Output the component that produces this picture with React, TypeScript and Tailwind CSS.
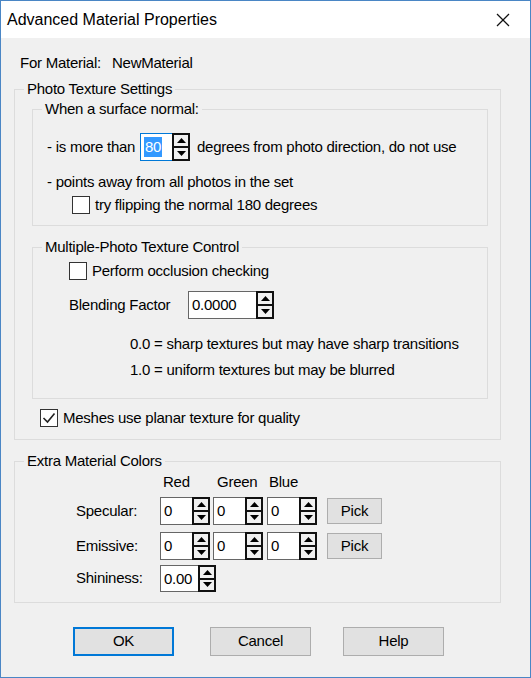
import React from 'react';

const font = { fontFamily: '"Liberation Sans", Arial, sans-serif' };

function Arrow({ up }: { up: boolean }) {
  return (
    <svg width="9" height="5" viewBox="0 0 9 5" className="block">
      {up ? <polygon points="0,5 9,5 4.5,0" fill="#000" /> : <polygon points="0,0 9,0 4.5,5" fill="#000" />}
    </svg>
  );
}

function Spin({ value, width, height = 28, focused = false }: { value: string; width: string; height?: number; focused?: boolean }) {
  return (
    <div
      className={`flex bg-white ${width} ${focused ? 'border border-[#0078d7]' : 'border border-[#666]'}`}
      style={{ height }}
    >
      <div className="flex-1 flex items-center pl-[3px] overflow-hidden">
        {focused ? (
          <span className="bg-[#3399ff] text-white leading-[20px] px-[1px]">{value}</span>
        ) : (
          <span className="leading-[20px]">{value}</span>
        )}
      </div>
      {/* spin buttons sit over the edit frame */}
      <div className="w-[18px] -my-[1px] -mr-[1px] flex flex-col border-2 border-[#111] bg-[#f0f0f0]">
        <div className="flex-1 flex items-center justify-center border-b-2 border-[#111]">
          <Arrow up />
        </div>
        <div className="flex-1 flex items-center justify-center">
          <Arrow up={false} />
        </div>
      </div>
    </div>
  );
}

function Check({ checked = false }: { checked?: boolean }) {
  return (
    <div className="w-[18px] h-[18px] border border-[#333] bg-white flex items-center justify-center shrink-0">
      {checked && (
        <svg width="14" height="12" viewBox="0 0 14 12">
          <polyline points="1.5,6 5.5,10 12.5,1.5" fill="none" stroke="#222" strokeWidth="1.6" />
        </svg>
      )}
    </div>
  );
}

function Btn({ label, primary = false, className = '' }: { label: string; primary?: boolean; className?: string }) {
  return (
    <div
      className={`flex items-center justify-center bg-[#e1e1e1] ${
        primary ? 'border-2 border-[#0078d7]' : 'border border-[#adadad]'
      } ${className}`}
    >
      {label}
    </div>
  );
}

export default function App() {
  return (
    <div
      className="w-[531px] h-[678px] flex flex-col border border-[#4a86c5] bg-[#f0f0f0] text-black text-[15px] tracking-[-0.25px] overflow-hidden"
      style={font}
    >
      {/* title bar */}
      <div className="h-[37px] bg-white flex items-center justify-between pl-[6px] pr-[20px] shrink-0">
        <span className="text-[16px] tracking-normal">Advanced Material Properties</span>
        <svg width="14" height="14" viewBox="0 0 14 14">
          <line x1="1" y1="1" x2="13" y2="13" stroke="#111" strokeWidth="1.2" />
          <line x1="13" y1="1" x2="1" y2="13" stroke="#111" strokeWidth="1.2" />
        </svg>
      </div>

      <div className="flex flex-col pt-[16px] pl-[13px]">
        <div className="flex h-[18px] leading-[18px] pl-[6px]">
          <span className="w-[92px]">For Material:</span>
          <span>NewMaterial</span>
        </div>

        {/* Photo Texture Settings */}
        <fieldset className="mt-[8px] w-[487px] border border-[#dcdcdc] pb-[12px]">
          <legend className="ml-[9px] px-[3px] leading-[18px]">Photo Texture Settings</legend>

          <fieldset className="mt-[2px] ml-[17px] w-[456px] border border-[#dcdcdc] pb-[11px]">
            <legend className="ml-[9px] px-[3px] leading-[18px]">When a surface normal:</legend>
            <div className="mt-[15px] flex items-center h-[28px] pl-[14px]">
              <span className="w-[93px]">- is more than</span>
              <Spin value="80" width="w-[50px]" focused />
              <span className="ml-[7px]">degrees from photo direction, do not use</span>
            </div>
            <div className="mt-[12px] h-[18px] leading-[18px] pl-[14px]">- points away from all photos in the set</div>
            <div className="mt-[5px] h-[18px] flex items-center pl-[39px]">
              <Check />
              <span className="ml-[5px]">try flipping the normal 180 degrees</span>
            </div>
          </fieldset>

          <fieldset className="mt-[12px] ml-[17px] w-[456px] border border-[#dcdcdc] pb-[19px]">
            <legend className="ml-[9px] px-[3px] leading-[18px]">Multiple-Photo Texture Control</legend>
            <div className="mt-[6px] h-[18px] flex items-center pl-[36px]">
              <Check />
              <span className="ml-[5px]">Perform occlusion checking</span>
            </div>
            <div className="mt-[11px] h-[28px] flex items-center pl-[36px]">
              <span className="w-[119px]">Blending Factor</span>
              <Spin value="0.0000" width="w-[86px]" />
            </div>
            <div className="mt-[16px] h-[18px] leading-[18px] pl-[97px]">0.0 = sharp textures but may have sharp transitions</div>
            <div className="mt-[8px] h-[18px] leading-[18px] pl-[97px]">1.0 = uniform textures but may be blurred</div>
          </fieldset>

          <div className="mt-[10px] h-[18px] flex items-center pl-[25px]">
            <Check checked />
            <span className="ml-[5px]">Meshes use planar texture for quality</span>
          </div>
        </fieldset>

        {/* Extra Material Colors */}
        <fieldset className="mt-[12px] w-[487px] border border-[#dcdcdc] pb-[10px]">
          <legend className="ml-[9px] px-[3px] leading-[18px]">Extra Material Colors</legend>
          <div className="mt-[3px] h-[18px] leading-[18px] flex pl-[148px]">
            <span className="w-[54px]">Red</span>
            <span className="w-[52px]">Green</span>
            <span>Blue</span>
          </div>
          <div className="mt-[6px] h-[28px] flex items-center pl-[61px]">
            <span className="w-[84px]">Specular:</span>
            <Spin value="0" width="w-[50px]" />
            <div className="ml-[3px]"><Spin value="0" width="w-[50px]" /></div>
            <div className="ml-[4px]"><Spin value="0" width="w-[50px]" /></div>
            <Btn label="Pick" className="ml-[10px] w-[55px] h-[26px]" />
          </div>
          <div className="mt-[7px] h-[28px] flex items-center pl-[61px]">
            <span className="w-[84px]">Emissive:</span>
            <Spin value="0" width="w-[50px]" />
            <div className="ml-[3px]"><Spin value="0" width="w-[50px]" /></div>
            <div className="ml-[4px]"><Spin value="0" width="w-[50px]" /></div>
            <Btn label="Pick" className="ml-[10px] w-[55px] h-[26px]" />
          </div>
          <div className="mt-[5px] h-[27px] flex items-center pl-[61px]">
            <span className="w-[84px]">Shininess:</span>
            <Spin value="0.00" width="w-[56px]" height={27} />
          </div>
        </fieldset>

        <div className="mt-[24px] flex pl-[59px]">
          <Btn label="OK" primary className="w-[101px] h-[29px]" />
          <Btn label="Cancel" className="ml-[36px] w-[101px] h-[29px]" />
          <Btn label="Help" className="ml-[32px] w-[101px] h-[29px]" />
        </div>
      </div>
    </div>
  );
}
